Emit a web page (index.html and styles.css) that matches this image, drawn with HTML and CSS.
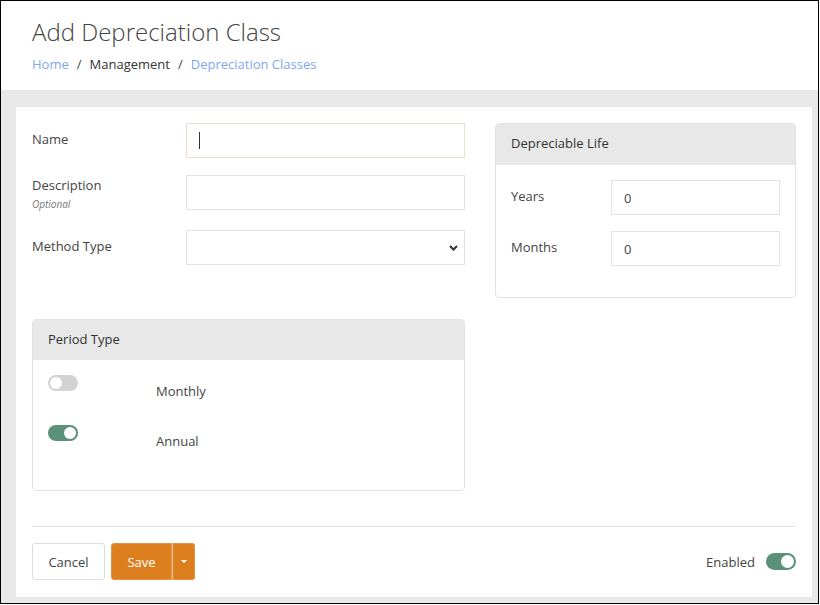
FILE: index.html
```
<!DOCTYPE html>
<html lang="en">

<head>
    <meta charset="UTF-8">
    <meta name="viewport" content="width=device-width, initial-scale=1.0">
    <title>Add Depreciation Class</title>
    <link rel="stylesheet" href="styles.css">
</head>

<body>
    <div class="frame">
        <header class="page-head">
            <h1>Add Depreciation Class</h1>
            <nav class="breadcrumb">
                <a href="#" class="crumb link">Home</a>
                <span class="crumb">Management</span>
                <a href="#" class="crumb link">Depreciation Classes</a>
            </nav>
        </header>

        <main class="page-body">
            <div class="card">
                <div class="form-grid">
                    <div class="col-left">
                        <div class="form-row">
                            <label class="label single">Name</label>
                            <div class="field focused"><span class="caret"></span></div>
                        </div>
                        <div class="form-row">
                            <div class="label">
                                Description
                                <span class="hint">Optional</span>
                            </div>
                            <input class="field top" type="text">
                        </div>
                        <div class="form-row">
                            <label class="label single">Method Type</label>
                            <div class="field select">
                                <svg width="9" height="6" viewBox="0 0 9 6">
                                    <path d="M1 1 L4.5 4.5 L8 1" fill="none" stroke="#333" stroke-width="2"/>
                                </svg>
                            </div>
                        </div>

                        <div class="panel period">
                            <div class="panel-head">Period Type</div>
                            <div class="panel-body">
                                <div class="switch-row">
                                    <span class="switch"></span>
                                    <span class="switch-label">Monthly</span>
                                </div>
                                <div class="switch-row">
                                    <span class="switch on"></span>
                                    <span class="switch-label">Annual</span>
                                </div>
                            </div>
                        </div>
                    </div>

                    <div class="col-right">
                        <div class="panel">
                            <div class="panel-head">Depreciable Life</div>
                            <div class="panel-body life">
                                <div class="form-row small">
                                    <label class="label single">Years</label>
                                    <input class="field" type="text" value="0">
                                </div>
                                <div class="form-row small">
                                    <label class="label single">Months</label>
                                    <input class="field" type="text" value="0">
                                </div>
                            </div>
                        </div>
                    </div>
                </div>

                <hr class="divider">

                <div class="footer">
                    <div class="actions">
                        <button class="btn cancel">Cancel</button>
                        <div class="btn-group">
                            <button class="btn primary">Save</button>
                            <button class="btn primary split"><span class="tri"></span></button>
                        </div>
                    </div>
                    <div class="enabled">
                        <span>Enabled</span>
                        <span class="switch on"></span>
                    </div>
                </div>
            </div>
        </main>
    </div>
</body>

</html>
```

FILE: styles.css
```
* {
    box-sizing: border-box;
}

body {
    margin: 0;
    font-family: "Open Sans", "Noto Sans", sans-serif;
    font-size: 13px;
    color: #444;
    background-color: #fff;
}

.frame {
    width: 819px;
    height: 604px;
    border: 1px solid #000;
    background-color: #e8e8e8;
    overflow: hidden;
}

/* header */
.page-head {
    height: 89px;
    background-color: #fff;
    padding: 16px 31px 0;
}

.page-head h1 {
    margin: 0;
    font-size: 24px;
    font-weight: 300;
    line-height: 30px;
    color: #444;
}

.breadcrumb {
    margin-top: 7px;
    line-height: 20px;
    display: flex;
}

.crumb {
    color: #333;
    text-decoration: none;
}

.crumb.link {
    color: #7ea9ec;
}

.crumb + .crumb::before {
    content: "/";
    color: #444;
    padding: 0 8px 0 8px;
}

/* body */
.page-body {
    padding: 17px 6px 0 15px;
}

.card {
    width: 796px;
    height: 490px;
    background-color: #fff;
    padding: 16px 16px;
}

.form-grid {
    display: grid;
    grid-template-columns: 433px 1fr;
    column-gap: 30px;
    align-items: start;
}

.form-row {
    display: grid;
    grid-template-columns: 154px 1fr;
    align-items: center;
    margin-bottom: 17px;
}

.form-row.small {
    grid-template-columns: 100px 1fr;
    margin-bottom: 16px;
}

.label {
    line-height: 20px;
    color: #444;
}

.label.single {
    margin-bottom: 4px;
}

.hint {
    display: block;
    font-size: 10px;
    font-style: italic;
    line-height: 18px;
    color: #777;
}

.field {
    height: 35px;
    width: 100%;
    border: 1px solid #e3e3e3;
    background-color: #fff;
    padding: 0 12px;
    font-family: inherit;
    font-size: 13px;
    color: #444;
    outline: none;
    display: flex;
    align-items: center;
}

.field.top {
    align-self: start;
}

.field.focused {
    border-color: #eadfcf;
}

.caret {
    width: 1px;
    height: 17px;
    background-color: #333;
}

.select {
    justify-content: flex-end;
    padding-right: 6px;
}

/* panels */
.panel {
    border: 1px solid #e3e3e3;
    border-radius: 4px;
    overflow: hidden;
}

.panel.period {
    margin-top: 54px;
}

.panel-head {
    background-color: #e8e8e8;
    color: #333;
    padding: 0 15px;
    height: 40px;
    line-height: 38px;
}

.col-right .panel-head {
    height: 41px;
    line-height: 39px;
}

.panel-body {
    padding: 15px 15px 15px;
}

.switch-row {
    display: grid;
    grid-template-columns: 108px 1fr;
    height: 34px;
    margin-bottom: 16px;
}

.switch-label {
    padding-top: 6px;
    line-height: 20px;
}

.switch {
    position: relative;
    display: inline-block;
    width: 30px;
    height: 16px;
    border-radius: 8px;
    background-color: #d3d3d3;
}

.switch::after {
    content: "";
    position: absolute;
    top: 2px;
    left: 2px;
    width: 12px;
    height: 12px;
    border-radius: 50%;
    background-color: #fff;
}

.switch.on {
    background-color: #5b9079;
}

.switch.on::after {
    left: 16px;
}

/* footer */
.divider {
    border: 0;
    border-top: 1px solid #e5e5e5;
    margin: 35px 0 16px;
}

.footer {
    display: flex;
    justify-content: space-between;
    align-items: center;
}

.actions {
    display: flex;
    gap: 6px;
}

.btn {
    height: 37px;
    padding: 0 16px;
    border: 1px solid #ddd;
    border-radius: 3px;
    background-color: #fff;
    font-family: inherit;
    font-size: 13px;
    color: #444;
}

.btn.cancel {
    width: 73px;
    padding: 0;
}

.btn-group {
    display: flex;
}

.btn.primary {
    background-color: #dd7f1e;
    border-color: #e29346;
    color: #fff;
    width: 61px;
    padding: 0;
    border-radius: 3px 0 0 3px;
}

.btn.split {
    width: 23px;
    border-left-color: #f3c99c;
    border-radius: 0 3px 3px 0;
    display: flex;
    align-items: center;
    justify-content: center;
}

.tri {
    width: 0;
    height: 0;
    border-left: 3px solid transparent;
    border-right: 3px solid transparent;
    border-top: 3px solid #fff;
}

.enabled {
    display: flex;
    align-items: center;
    gap: 11px;
    color: #444;
}

.enabled .switch {
    height: 17px;
    border-radius: 9px;
}

.enabled .switch::after {
    width: 13px;
    height: 13px;
    left: 15px;
}
```
